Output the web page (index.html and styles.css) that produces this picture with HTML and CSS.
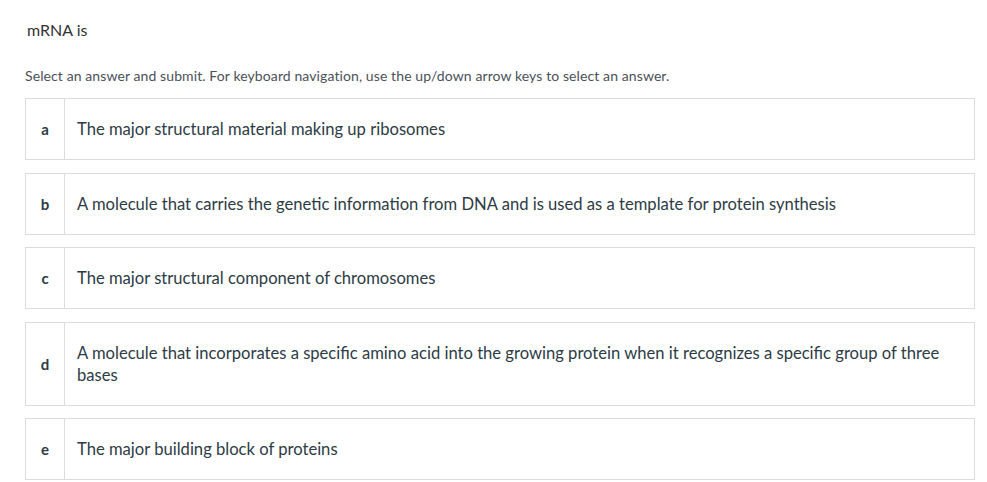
FILE: index.html
```html
<!DOCTYPE html>
<html lang="en">
<head>
    <meta charset="UTF-8">
    <title>mRNA is</title>
    <link rel="stylesheet" href="styles.css">
</head>
<body>
    <div class="question">
        <div class="prompt">mRNA is</div>
        <div class="hint">Select an answer and submit. For keyboard navigation, use the up/down arrow keys to select an answer.</div>
        <ul class="answers">
            <li class="answer">
                <span class="letter">a</span>
                <span class="text">The major structural material making up ribosomes</span>
            </li>
            <li class="answer">
                <span class="letter">b</span>
                <span class="text">A molecule that carries the genetic information from DNA and is used as a template for protein synthesis</span>
            </li>
            <li class="answer">
                <span class="letter">c</span>
                <span class="text">The major structural component of chromosomes</span>
            </li>
            <li class="answer">
                <span class="letter">d</span>
                <span class="text">A molecule that incorporates a specific amino acid into the growing protein when it recognizes a specific group of three bases</span>
            </li>
            <li class="answer">
                <span class="letter">e</span>
                <span class="text">The major building block of proteins</span>
            </li>
        </ul>
    </div>
</body>
</html>
```

FILE: styles.css
```css
body {
    margin: 0;
    padding: 0;
    background-color: #fff;
    color: #2d3b45;
    font-family: Lato, "Open Sans", sans-serif;
}

.question {
    padding: 20px 12px 0 25px;
}

.prompt {
    font-size: 16px;
    padding-left: 2px;
    line-height: 20px;
    color: #333;
}

.hint {
    margin-top: 27px;
    font-size: 14px;
    letter-spacing: 0.1px;
    line-height: 18px;
    color: #4a5158;
}

.answers {
    list-style: none;
    margin: 13px 0 0 0;
    padding: 0;
    display: flex;
    flex-direction: column;
    gap: 12.5px;
}

.answer {
    display: flex;
    border: 1px solid #dcdce0;
}

.letter {
    width: 38px;
    flex-shrink: 0;
    border-right: 1px solid #dcdce0;
    display: flex;
    align-items: center;
    justify-content: center;
    font-weight: bold;
    font-size: 15px;
}

.text {
    display: flex;
    align-items: center;
    padding: 19px 12px;
    font-size: 16.6px;
    line-height: 22px;
}
```
